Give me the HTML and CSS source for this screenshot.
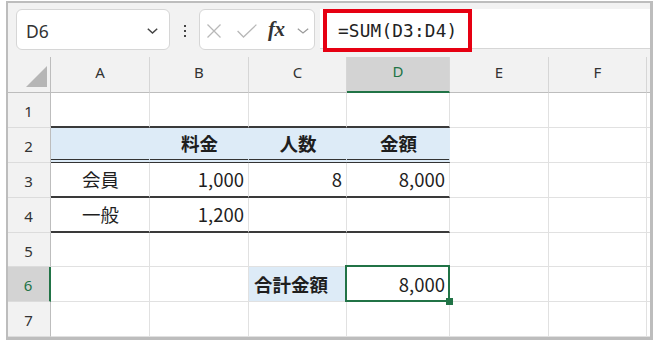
FILE: index.html
```html
<!DOCTYPE html>
<html lang="ja">
<head>
<meta charset="utf-8">
<title>Excel SUM</title>
<link rel="stylesheet" href="styles.css">
</head>
<body>
<div class="frame">
  <div class="toolbar">
    <div class="namebox">
      <span class="ref">D6</span>
      <svg class="chev" width="11" height="6" viewBox="0 0 11 6"><path d="M0.8 0.8 L5.5 5 L10.2 0.8" fill="none" stroke="#444" stroke-width="1.5"/></svg>
    </div>
    <div class="dots"><i></i><i></i><i></i></div>
    <div class="fxbox">
      <svg class="x" width="14" height="14" viewBox="0 0 14 14"><path d="M0.5 0.5 L13.5 13.5 M13.5 0.5 L0.5 13.5" stroke="#b8b8b8" stroke-width="1.3" fill="none"/></svg>
      <svg class="ok" width="20" height="14" viewBox="0 0 20 14"><path d="M0.6 7 L6.5 13 L19.4 0.6" stroke="#b8b8b8" stroke-width="1.3" fill="none"/></svg>
      <span class="fx">fx</span>
      <svg class="chev2" width="12" height="6" viewBox="0 0 12 6"><path d="M0.8 0.8 L6 5 L11.2 0.8" fill="none" stroke="#9a9a9a" stroke-width="1.2"/></svg>
    </div>
    <div class="formula">
      <div class="hl">=SUM(D3:D4)</div>
    </div>
  </div>
  <div class="grid">
    <div class="corner"><span class="tri"></span></div>
    <div class="ch">A</div><div class="ch">B</div><div class="ch">C</div><div class="ch selh">D</div><div class="ch">E</div><div class="ch">F</div><div class="ch last"></div>

    <div class="rh">1</div>
    <div class="c bt"></div><div class="c bt"></div><div class="c bt"></div><div class="c bt"></div><div class="c"></div><div class="c"></div><div class="c last"></div>

    <div class="rh">2</div>
    <div class="c fill bd"></div><div class="c fill bd b ctr">料金</div><div class="c fill bd b ctr">人数</div><div class="c fill bd b ctr">金額</div><div class="c"></div><div class="c"></div><div class="c last"></div>

    <div class="rh">3</div>
    <div class="c bt ctr">会員</div><div class="c bt r">1,000</div><div class="c bt r">8</div><div class="c bt r">8,000</div><div class="c"></div><div class="c"></div><div class="c last"></div>

    <div class="rh">4</div>
    <div class="c bt ctr">一般</div><div class="c bt r">1,200</div><div class="c bt"></div><div class="c bt"></div><div class="c"></div><div class="c"></div><div class="c last"></div>

    <div class="rh">5</div>
    <div class="c"></div><div class="c"></div><div class="c"></div><div class="c"></div><div class="c"></div><div class="c"></div><div class="c last"></div>

    <div class="rh selr">6</div>
    <div class="c"></div><div class="c"></div><div class="c fill b">合計金額</div><div class="c r sel">8,000</div><div class="c"></div><div class="c"></div><div class="c last"></div>

    <div class="rh">7</div>
    <div class="c"></div><div class="c"></div><div class="c"></div><div class="c"></div><div class="c"></div><div class="c"></div><div class="c last"></div>
  </div>
</div>
</body>
</html>
```

FILE: styles.css
```css
* { box-sizing: border-box; }
html, body { margin: 0; padding: 0; background: #ffffff; }

.frame {
  margin: 1px 0 0 6px;
  width: 647px;
  height: 339px;
  border-style: solid;
  border-color: #bdbdbd;
  border-width: 2px 3px 3px 2px;
  background: #f2f2f2;
  overflow: hidden;
}

/* toolbar */
.toolbar {
  height: 54px;
  display: flex;
  align-items: flex-start;
  padding: 6px 0 0 8px;
  background: #f2f2f2;
}
.namebox {
  width: 154px;
  height: 41px;
  background: #fff;
  border: 1px solid #d6d6d6;
  border-radius: 6px;
  display: flex;
  align-items: center;
  padding: 0 11px 0 9px;
}
.ref {
  font-family: "Noto Sans", sans-serif;
  font-size: 17.5px;
  color: #333;
  flex: 1;
  padding-top: 3px;
}
.chev { margin-top: 3px; }
.dots {
  width: 29px;
  height: 41px;
  display: flex;
  flex-direction: column;
  align-items: center;
  justify-content: center;
  gap: 3px;
  padding-top: 2px;
}
.dots i {
  display: block;
  width: 2px;
  height: 2px;
  background: #444;
}
.fxbox {
  width: 116px;
  height: 41px;
  background: #fff;
  border: 1px solid #d6d6d6;
  border-radius: 6px;
  display: flex;
  align-items: center;
  padding-left: 7px;
}
.fxbox .x { margin-right: 16px; margin-top: 3px; }
.fxbox .ok { margin-right: 11px; margin-top: 3px; }
.fx {
  font-family: "Liberation Serif", serif;
  font-style: italic;
  font-weight: 700;
  font-size: 21px;
  color: #333;
  width: 29px;
  letter-spacing: -0.5px;
}
.chev2 { margin-top: 3px; }
.formula {
  margin-left: 5px;
  width: 330px;
  height: 40px;
  background: #fff;
  border-bottom: 1px solid #d6d6d6;
  display: flex;
  align-items: flex-start;
  padding-left: 3px;
}
.hl {
  width: 149px;
  height: 43px;
  border: 4px solid #e60012;
  display: flex;
  align-items: center;
  padding-left: 11px;
  font-family: "DejaVu Sans Mono", monospace;
  font-size: 17.7px;
  color: #222;
  background: #fff;
  letter-spacing: 0.2px;
}

/* grid */
.grid {
  display: grid;
  grid-template-columns: 43px 99px 99px 98px 103px 99px 98px 3px;
  grid-template-rows: 36px 35px 35px 35px 35px 34px 35px 35px;
  background: #fff;
}
.corner {
  background: #f2f2f2;
  border-right: 1px solid #bdbdbd;
  border-bottom: 1px solid #bdbdbd;
  display: flex;
  align-items: flex-end;
  justify-content: flex-end;
  padding: 0 3px 5px 0;
}
.tri {
  display: block;
  width: 21px;
  height: 21px;
  background: #b6b6b6;
  clip-path: polygon(100% 0, 100% 100%, 0 100%);
}
.ch {
  background: #f2f2f2;
  border-right: 1px solid #d6d6d6;
  border-bottom: 1px solid #bdbdbd;
  display: flex;
  align-items: center;
  justify-content: center;
  padding-bottom: 6px;
  font-family: "Noto Sans", sans-serif;
  font-size: 15px;
  color: #333;
}
.ch.last { border-right: none; }
.ch.selh {
  background: #d3d3d3;
  border-bottom: 2px solid #217346;
  color: #217346;
}
.rh {
  background: #f2f2f2;
  border-right: 1px solid #bdbdbd;
  border-bottom: 1px solid #dcdcdc;
  display: flex;
  align-items: center;
  justify-content: center;
  padding-top: 2px;
  padding-right: 1px;
  font-family: "Noto Sans", sans-serif;
  font-size: 15px;
  color: #333;
}
.rh.selr {
  background: #d3d3d3;
  border-right: 2px solid #217346;
  color: #217346;
}
.c {
  border-right: 1px solid #e1e1e1;
  border-bottom: 1px solid #e1e1e1;
  display: flex;
  align-items: center;
  padding: 0 4px 0 5px;
  font-family: "Noto Sans CJK JP", "Noto Sans", sans-serif;
  font-size: 18.5px;
  line-height: 1;
  color: #1e1e1e;
}
.c.last { border-right: none; }
.c.bt { border-bottom: 2px solid #3a3a3a; }
.c.bd { border-bottom: 4px double #333; }
.c.fill { background: #ddebf7; border-right-color: #ddebf7; }
.c.b { font-weight: 700; }
.c.ctr { justify-content: center; }
.c.r { justify-content: flex-end; }
.c.sel {
  position: relative;
  z-index: 1;
}
.c.sel::after {
  content: "";
  position: absolute;
  top: -2px;
  left: -2px;
  right: -1px;
  bottom: -1px;
  border: 2px solid #217346;
}
.c.sel::before {
  content: "";
  position: absolute;
  right: -4px;
  bottom: -4px;
  width: 7px;
  height: 7px;
  background: #217346;
  z-index: 2;
}
```
